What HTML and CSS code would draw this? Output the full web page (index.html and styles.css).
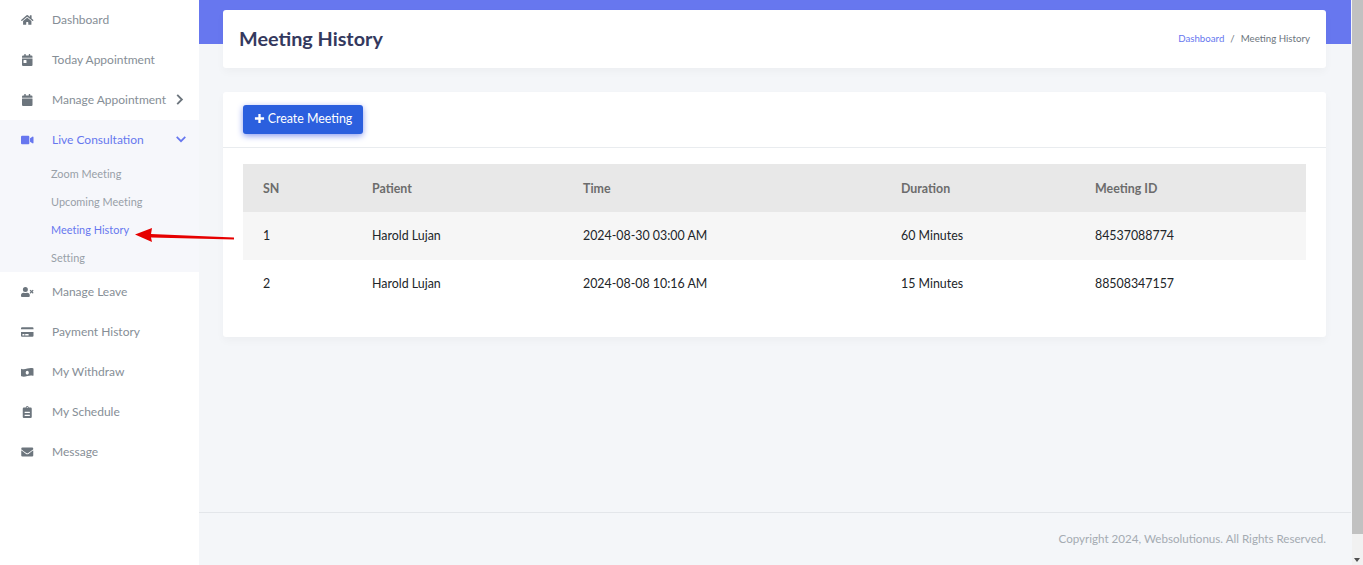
FILE: index.html
```html
<!DOCTYPE html>
<html lang="en">
<head>
<meta charset="utf-8">
<title>Meeting History</title>
<link rel="stylesheet" href="styles.css">
</head>
<body>
<div class="app">
  <aside class="sidebar">
    <ul class="menu">
      <li class="item"><svg class="ico" viewBox="0 0 576 512"><path d="M280 148 96 300v164a16 16 0 0 0 16 16l112-.3a16 16 0 0 0 16-16V368a16 16 0 0 1 16-16h64a16 16 0 0 1 16 16v96a16 16 0 0 0 16 16l112 .3a16 16 0 0 0 16-16V300L296 148a12 12 0 0 0-16 0zM572 251l-84-69V44a12 12 0 0 0-12-12h-56a12 12 0 0 0-12 12v72l-89-74a48 48 0 0 0-61 0L4 251a12 12 0 0 0-2 17l26 31a12 12 0 0 0 17 2L280 107a12 12 0 0 1 16 0l235 194a12 12 0 0 0 17-2l26-31a12 12 0 0 0-2-17z"/></svg><span>Dashboard</span></li>
      <li class="item"><svg class="ico" viewBox="0 0 448 512"><path d="M0 464a48 48 0 0 0 48 48h352a48 48 0 0 0 48-48V192H0zm64-192a16 16 0 0 1 16-16h96a16 16 0 0 1 16 16v96a16 16 0 0 1-16 16H80a16 16 0 0 1-16-16zM400 64h-48V16a16 16 0 0 0-16-16h-32a16 16 0 0 0-16 16v48H160V16a16 16 0 0 0-16-16h-32a16 16 0 0 0-16 16v48H48A48 48 0 0 0 0 112v48h448v-48a48 48 0 0 0-48-48z"/></svg><span>Today Appointment</span></li>
      <li class="item"><svg class="ico" viewBox="0 0 448 512"><path d="M12 192h424a12 12 0 0 1 12 12v260a48 48 0 0 1-48 48H48a48 48 0 0 1-48-48V204a12 12 0 0 1 12-12zm436-44v-36a48 48 0 0 0-48-48h-48V12a12 12 0 0 0-12-12h-40a12 12 0 0 0-12 12v52H160V12a12 12 0 0 0-12-12h-40a12 12 0 0 0-12 12v52H48A48 48 0 0 0 0 112v36a12 12 0 0 0 12 12h424a12 12 0 0 0 12-12z"/></svg><span>Manage Appointment</span><svg class="chev" viewBox="0 0 10 14"><path d="M2 2l5 5-5 5"/></svg></li>
      <li class="group">
        <div class="item item-active"><svg class="ico" viewBox="0 0 576 512"><path d="M336 64H48A48 48 0 0 0 0 112v288a48 48 0 0 0 48 48h288a48 48 0 0 0 48-48V112a48 48 0 0 0-48-48zm190 38-110 76v156l110 76c21 14 50-1 50-26V128c0-26-29-40-50-26z"/></svg><span>Live Consultation</span><svg class="chev chev-down" viewBox="0 0 14 10"><path d="M2 2l5 5 5-5"/></svg></div>
        <ul class="sub">
          <li>Zoom Meeting</li>
          <li>Upcoming Meeting</li>
          <li class="sub-active">Meeting History</li>
          <li>Setting</li>
        </ul>
      </li>
      <li class="item"><svg class="ico" viewBox="0 0 640 512"><path d="M589.6 240l45.6-45.6c6.3-6.3 6.3-16.5 0-22.8l-22.8-22.8c-6.3-6.3-16.5-6.3-22.8 0L544 194.4l-45.6-45.6c-6.3-6.3-16.5-6.3-22.8 0l-22.8 22.8c-6.3 6.3-6.3 16.5 0 22.8l45.6 45.6-45.6 45.6c-6.3 6.3-6.3 16.5 0 22.8l22.8 22.8c6.3 6.3 16.5 6.3 22.8 0l45.6-45.6 45.6 45.6c6.3 6.3 16.5 6.3 22.8 0l22.8-22.8c6.3-6.3 6.3-16.5 0-22.8L589.6 240zM224 256a128 128 0 1 0 0-256 128 128 0 0 0 0 256zm90 32h-17a174 174 0 0 1-146 0h-17A134 134 0 0 0 0 422v42a48 48 0 0 0 48 48h352a48 48 0 0 0 48-48v-42a134 134 0 0 0-134-134z"/></svg><span>Manage Leave</span></li>
      <li class="item"><svg class="ico" viewBox="0 0 576 512"><path d="M0 432a48 48 0 0 0 48 48h480a48 48 0 0 0 48-48V256H0zm192-68a12 12 0 0 1 12-12h136a12 12 0 0 1 12 12v40a12 12 0 0 1-12 12H204a12 12 0 0 1-12-12zm-128 0a12 12 0 0 1 12-12h72a12 12 0 0 1 12 12v40a12 12 0 0 1-12 12H76a12 12 0 0 1-12-12zM576 80v48H0V80a48 48 0 0 1 48-48h480a48 48 0 0 1 48 48z"/></svg><span>Payment History</span></li>
      <li class="item"><svg class="ico" viewBox="0 0 640 512"><path fill-rule="evenodd" d="M621 70c-39-16-78-22-117-22-123 0-247 63-370 63-31 0-62-4-93-15C20 90 0 105 0 126v317c0 13 7 25 19 30 39 16 78 22 117 22 123 0 247-63 370-63 31 0 62 4 93 15 21 6 41-9 41-30V100c0-13-7-25-19-30zM320 384c-44 0-80-43-80-96s36-96 80-96 80 43 80 96-36 96-80 96z"/></svg><span>My Withdraw</span></li>
      <li class="item"><svg class="ico" viewBox="0 0 384 512"><path d="M336 64h-80a64 64 0 0 0-128 0H48A48 48 0 0 0 0 112v352a48 48 0 0 0 48 48h288a48 48 0 0 0 48-48V112a48 48 0 0 0-48-48zm-144-24a24 24 0 1 1 0 48 24 24 0 0 1 0-48zm112 372a12 12 0 0 1-12 12H92a12 12 0 0 1-12-12v-24a12 12 0 0 1 12-12h200a12 12 0 0 1 12 12zm0-128a12 12 0 0 1-12 12H92a12 12 0 0 1-12-12v-24a12 12 0 0 1 12-12h200a12 12 0 0 1 12 12z"/></svg><span>My Schedule</span></li>
      <li class="item"><svg class="ico" viewBox="0 0 512 512"><path d="M502 191c4-3 10 0 10 5v204a48 48 0 0 1-48 48H48a48 48 0 0 1-48-48V196c0-5 6-8 10-5 22 17 52 39 154 113 21 15 57 48 92 48s72-33 92-48c102-74 132-96 154-113zM256 320c23 0 57-29 73-41 133-97 143-105 174-129 6-5 9-12 9-19v-19a48 48 0 0 0-48-48H48a48 48 0 0 0-48 48v19c0 7 3 14 9 19 31 24 41 32 174 129 16 12 50 41 73 41z"/></svg><span>Message</span></li>
    </ul>
  </aside>
  <div class="main">
    <div class="banner"></div>
    <div class="content">
      <header class="page-head">
        <h1>Meeting History</h1>
        <nav class="crumbs"><a>Dashboard</a><i>/</i><span>Meeting History</span></nav>
      </header>
      <section class="card">
        <div class="card-head">
          <button class="btn"><svg class="plus" viewBox="0 0 12 12"><path d="M6 1v10M1 6h10"/></svg>Create Meeting</button>
        </div>
        <div class="card-body">
          <table class="tbl">
            <thead><tr><th class="c1">SN</th><th class="c2">Patient</th><th class="c3">Time</th><th class="c4">Duration</th><th>Meeting ID</th></tr></thead>
            <tbody>
              <tr class="odd"><td>1</td><td>Harold Lujan</td><td>2024-08-30 03:00 AM</td><td>60 Minutes</td><td>84537088774</td></tr>
              <tr><td>2</td><td>Harold Lujan</td><td>2024-08-08 10:16 AM</td><td>15 Minutes</td><td>88508347157</td></tr>
            </tbody>
          </table>
        </div>
      </section>
    </div>
    <footer class="foot">Copyright 2024, Websolutionus. All Rights Reserved.</footer>
  </div>
  <div class="scroll"><div class="thumb"></div><div class="track"></div><div class="arr-down"></div></div>
</div>
<svg class="note" width="110" height="24" viewBox="0 0 110 24"><path d="M17 10 L100 13.600 L100 15.600 L17 13.500 L18 18 L1 10.500 L18 4z"/></svg>
</body>
</html>
```
FILE: styles.css
```css
* { box-sizing: border-box; }
html, body { margin: 0; height: 100%; overflow: hidden; }
body { font-family: "Lato", "Noto Sans", sans-serif; background: #f4f6f9; color: #000; position: relative; }
ul { list-style: none; margin: 0; padding: 0; }
.app { display: flex; height: 565px; }
.sidebar { width: 199px; flex: none; background: #fff; height: 100%; }
.menu { display: flex; flex-direction: column; }
.item { height: 40px; display: flex; align-items: center; padding-left: 21px; padding-bottom: 1px; font-size: 12px; color: #868e96; white-space: nowrap; }
.ico { width: 12.500px; height: 12px; fill: #6c757d; flex: none; margin-right: 18.500px; }
.chev { width: 10px; height: 13px; fill: none; stroke: #6c757d; stroke-width: 2; margin-left: auto; margin-right: 14px; }
.group { background: #f6f7fb; }
.item-active { color: #6777ef; }
.item-active .ico { fill: #6777ef; }
.chev-down { width: 12px; height: 9px; stroke: #6777ef; margin-right: 12px; }
.sub { padding-bottom: 0; }
.sub li { height: 28px; line-height: 27px; padding-left: 51px; font-size: 10.900px; letter-spacing: .03px; color: #98a0a8; }
.sub .sub-active { color: #6777ef; }
.main { flex: 1; position: relative; display: flex; flex-direction: column; min-width: 0; }
.banner { position: absolute; top: 0; left: 0; right: 0; height: 44px; background: #6777ef; }
.content { position: relative; flex: 1; padding: 10px 25px 0 24px; }
.page-head { height: 58px; background: #fff; border-radius: 3px; box-shadow: 0 4px 8px rgba(0,0,0,.03); display: flex; align-items: center; justify-content: space-between; padding: 0 16px 2px; }
.page-head h1 { margin: 0; font-size: 19.800px; font-weight: 700; color: #34395e; }
.crumbs { font-size: 9.700px; color: #6c757d; display: flex; align-items: center; }
.crumbs a { color: #6777ef; }
.crumbs i { font-style: normal; margin: 0 6px; }
.card { margin-top: 24px; background: #fff; border-radius: 3px; box-shadow: 0 4px 8px rgba(0,0,0,.03); height: 245px; }
.card-head { height: 56px; padding: 13px 20px 0; border-bottom: 1px solid #e9ecef; }
.btn { height: 29px; width: 120px; border: 0; border-radius: 3px; background: #2b5fde; color: #fff; font: 12.400px "Lato", sans-serif; display: flex; align-items: center; justify-content: center; box-shadow: 0 2px 6px #8e9ef0; padding: 0 0 2px; }
.plus { width: 11px; height: 11px; fill: none; stroke: #fff; stroke-width: 2.500; margin-right: 3px; }
.card-body { padding: 16px 20px 0; }
.tbl { width: 100%; border-collapse: collapse; font-size: 12.400px; table-layout: fixed; }
.tbl th { height: 48px; background: #e8e8e8; text-align: left; font-weight: 700; color: #6c6c6c; padding: 0 20px; font-size: 12.400px; }
.tbl td { height: 48px; padding: 0 20px 1px; color: #212529; }
.c1 { width: 109px; }
.c2 { width: 211px; }
.c3 { width: 318px; }
.c4 { width: 194px; }
.odd td { background: #f6f6f6; }
.foot { height: 53px; border-top: 1px solid #e3e6ea; margin: 0; display: flex; align-items: center; justify-content: flex-end; padding: 0 25px 1px 0; font-size: 11.600px; color: #a4abb2; }
.scroll { width: 11px; flex: none; background: #f1f1f1; margin-left: 1px; position: relative; }
.thumb { height: 534px; background: #c1c1c1; }
.arr-down { position: absolute; left: 2px; bottom: 3px; border: 3.500px solid transparent; border-top: 4px solid #505050; border-bottom: 0; }
.note { position: absolute; left: 134px; top: 224px; fill: #e60000; }
```
